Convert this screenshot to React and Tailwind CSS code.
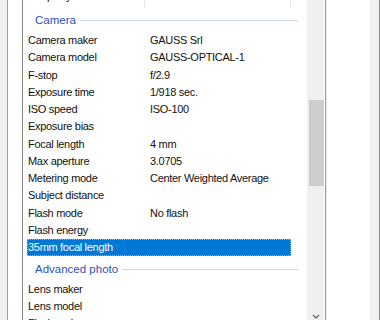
import React from 'react'

const CAMERA_ROWS = [
  ['Camera maker', 'GAUSS Srl'],
  ['Camera model', 'GAUSS-OPTICAL-1'],
  ['F-stop', 'f/2.9'],
  ['Exposure time', '1/918 sec.'],
  ['ISO speed', 'ISO-100'],
  ['Exposure bias', ''],
  ['Focal length', '4 mm'],
  ['Max aperture', '3.0705'],
  ['Metering mode', 'Center Weighted Average'],
  ['Subject distance', ''],
  ['Flash mode', 'No flash'],
  ['Flash energy', ''],
  ['35mm focal length', '', true],
]

const ADVANCED_ROWS = [
  ['Lens maker', ''],
  ['Lens model', ''],
  ['Flash maker', ''],
]

function GroupHeader({ title }) {
  return (
    <div className="flex items-center h-[24.5px] pt-[2px] pl-[12px] w-[275px]">
      <span className="text-[11.5px] text-[#2a4fc0] leading-none">{title}</span>
      <div className="flex-1 h-px bg-[#cbd8f2] ml-[4px] mt-[-1px]"></div>
    </div>
  )
}

function Row({ name, value, selected }) {
  return (
    <div
      className={`flex h-[17.25px] leading-[17.25px] ml-[4px] w-[264px] text-[11px] tracking-[-0.3px] whitespace-nowrap ${
        selected ? 'bg-[#0078d7] text-white outline-1 outline-dotted outline-[#e8a060] outline-offset-[-1px]' : 'text-[#111]'
      }`}
    >
      <div className="w-[122px] pl-px">{name}</div>
      <div className="pl-px">{value}</div>
    </div>
  )
}

export default function App() {
  return (
    <div className="w-[380px] h-[320px] overflow-hidden flex bg-[#f0f0f0] font-['Liberation_Sans',Arial,sans-serif]">
      <div className="w-[7px] bg-[#f0f0f0]"></div>
      <div className="w-px bg-[#a0a0a0]"></div>
      <div className="w-[14px] bg-white"></div>
      <div className="w-px bg-[#828790]"></div>

      {/* List view */}
      <div className="w-[284px] bg-white overflow-hidden">
        {/* Column header, mostly scrolled off */}
        <div className="flex h-[23px] mt-[-15.5px] text-[11px] text-[#111] leading-[23px]">
          <div className="w-[122px] pl-[7px] border-r border-[#e5e5e5]">Property</div>
          <div className="w-[146px] pl-[6px] border-r border-[#e5e5e5]">Value</div>
        </div>

        <GroupHeader title="Camera" />
        {CAMERA_ROWS.map(([n, v, s]) => (
          <Row key={n} name={n} value={v} selected={s} />
        ))}

        <GroupHeader title="Advanced photo" />
        {ADVANCED_ROWS.map(([n, v]) => (
          <Row key={n} name={n} value={v} />
        ))}
      </div>

      {/* Scrollbar */}
      <div className="w-[17px] bg-[#f0f0f0] flex flex-col">
        <div className="h-[100px]"></div>
        <div className="h-[86px] ml-[2px] bg-[#cdcdcd]"></div>
        <div className="flex-1"></div>
        <div className="h-[6px] flex justify-center">
          <svg width="8" height="6" viewBox="0 0 8 6">
            <polyline points="1,1 4,4 7,1" fill="none" stroke="#606060" strokeWidth="1.2" />
          </svg>
        </div>
      </div>

      <div className="w-px bg-white"></div>
      <div className="w-px bg-[#a0a0a0]"></div>
      <div className="w-px bg-[#e3e3e8]"></div>
      <div className="w-[43px] bg-white"></div>
      <div className="w-[9px] bg-[#f0f0f0]"></div>
      <div className="w-px bg-[#8a8a8a]"></div>
    </div>
  )
}
